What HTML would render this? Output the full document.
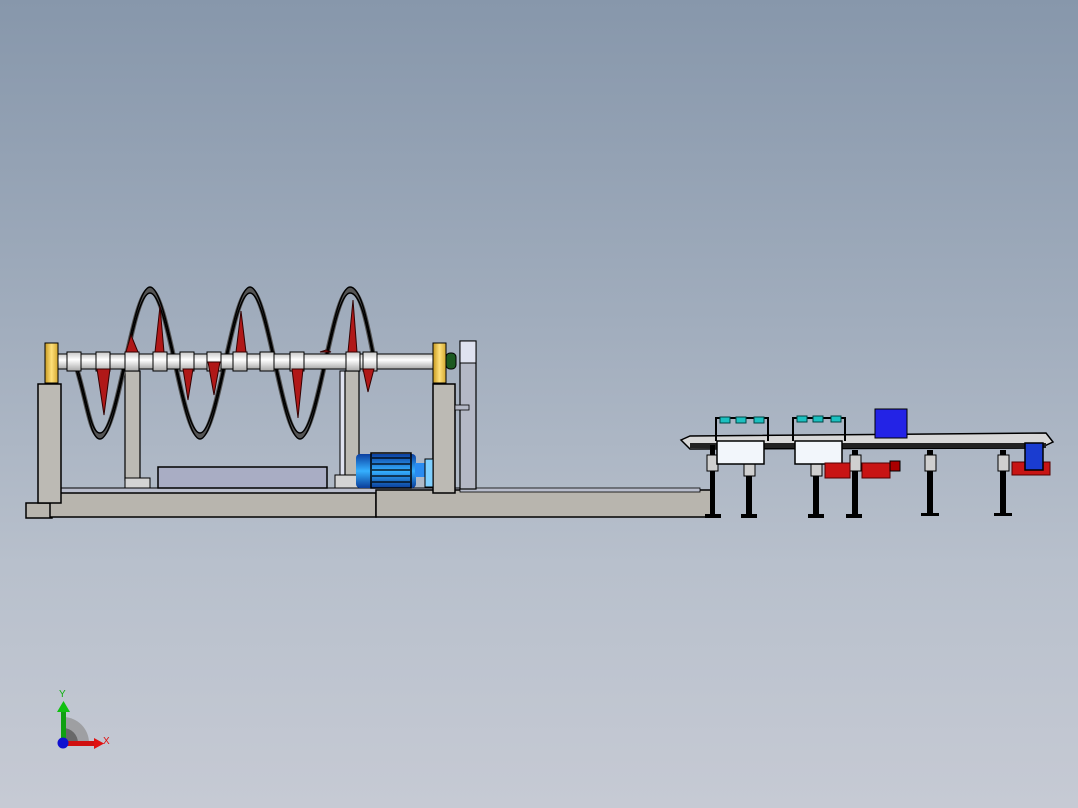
<!DOCTYPE html>
<html><head><meta charset="utf-8"><style>
html,body{margin:0;padding:0;width:1078px;height:808px;overflow:hidden}
body{background:linear-gradient(180deg,#8797ab 0%,#a1adbd 40%,#b8c0cc 70%,#c6cad4 100%)}
svg{position:absolute;left:0;top:0}
</style></head><body>
<svg width="1078" height="808" viewBox="0 0 1078 808" font-family="Liberation Sans, sans-serif">
<defs>
<linearGradient id="sh" x1="0" y1="0" x2="0" y2="1"><stop offset="0" stop-color="#c8c8c8"/><stop offset=".4" stop-color="#ffffff"/><stop offset="1" stop-color="#a8a8a8"/></linearGradient>
<linearGradient id="mot" x1="0" y1="0" x2="0" y2="1"><stop offset="0" stop-color="#0b3fa0"/><stop offset=".5" stop-color="#35b0ff"/><stop offset="1" stop-color="#0a3d9a"/></linearGradient>
<linearGradient id="yel" x1="0" y1="0" x2="1" y2="0"><stop offset="0" stop-color="#c89a20"/><stop offset=".5" stop-color="#ffe07a"/><stop offset="1" stop-color="#d4a830"/></linearGradient>
</defs>
<!-- base -->
<rect x="26" y="503" width="26" height="15" fill="#b8b5ae" stroke="#000" stroke-width="1.5"/>
<rect x="50" y="488" width="420" height="6" fill="#b9bdcc" stroke="#000"/>
<rect x="50" y="493" width="326" height="24" fill="#b8b5ae" stroke="#000" stroke-width="1.5"/>
<rect x="376" y="490" width="335" height="27" fill="#b8b5ae" stroke="#000" stroke-width="1.5"/>
<rect x="460" y="488" width="240" height="4" fill="#b9bdcc" stroke="#000" stroke-width=".8"/>
<!-- box -->
<rect x="158" y="467" width="169" height="21" fill="#a9adc4" stroke="#000" stroke-width="1.5"/>
<!-- posts -->
<rect x="38" y="384" width="23" height="119" fill="#bcbab4" stroke="#000" stroke-width="1.5"/>
<rect x="433" y="384" width="22" height="109" fill="#bcbab4" stroke="#000" stroke-width="1.5"/>
<rect x="460" y="341" width="16" height="148" fill="#b4b8c6" stroke="#000" stroke-width="1.2"/>
<rect x="460" y="341" width="16" height="22" fill="#dfe2f0" stroke="#000"/>
<rect x="455" y="405" width="14" height="5" fill="#b4b8c6" stroke="#000" stroke-width=".8"/>
<rect x="125" y="371" width="15" height="109" fill="#bcbab4" stroke="#000" stroke-width="1.2"/>
<rect x="125" y="478" width="25" height="10" fill="#d4d4d4" stroke="#000"/>
<rect x="340" y="371" width="6" height="110" fill="#dfe2f0" stroke="#000"/>
<rect x="345" y="371" width="14" height="109" fill="#bcbab4" stroke="#000" stroke-width="1.2"/>
<rect x="335" y="475" width="25" height="13" fill="#d4d4d4" stroke="#000"/>
<!-- motor -->
<rect x="356" y="454" width="60" height="34" rx="4" fill="url(#mot)"/>
<g stroke="#000" stroke-width="1.3"><line x1="372" y1="458" x2="410" y2="458"/><line x1="372" y1="464" x2="410" y2="464"/><line x1="372" y1="470" x2="410" y2="470"/><line x1="372" y1="476" x2="410" y2="476"/><line x1="372" y1="482" x2="410" y2="482"/></g>
<rect x="371" y="453" width="40" height="35" fill="none" stroke="#000" stroke-width="1.5"/>
<rect x="415" y="463" width="10" height="14" fill="#2a8cf0"/>
<rect x="425" y="459" width="8" height="28" fill="#7fd0ff" stroke="#000"/>
<!-- helix back -->
<path d="M75,363 C87,400 90,436 100,436 C118,436 132,290 150,290 C168,290 182,436 200,436 C218,436 232,290 250,290 C268,290 282,436 300,436 C318,436 332,290 350,290 C362,290 368,330 375,363" fill="none" stroke="#555" stroke-width="5"/>
<path d="M75,363 C87,400 90,436 100,436 C118,436 132,290 150,290 C168,290 182,436 200,436 C218,436 232,290 250,290 C268,290 282,436 300,436 C318,436 332,290 350,290 C362,290 368,330 375,363" fill="none" stroke="#000" stroke-width="1.5" transform="translate(0,-3)"/>
<path d="M75,363 C87,400 90,436 100,436 C118,436 132,290 150,290 C168,290 182,436 200,436 C218,436 232,290 250,290 C268,290 282,436 300,436 C318,436 332,290 350,290 C362,290 368,330 375,363" fill="none" stroke="#000" stroke-width="1.5" transform="translate(0,3)"/>
<!-- shaft -->
<rect x="58" y="354" width="380" height="15" fill="url(#sh)" stroke="#000"/>
<g fill="url(#sh)" stroke="#000">
<rect x="67" y="352" width="14" height="19"/><rect x="96" y="352" width="14" height="19"/><rect x="125" y="352" width="14" height="19"/><rect x="153" y="352" width="14" height="19"/><rect x="180" y="352" width="14" height="19"/><rect x="207" y="352" width="14" height="19"/><rect x="233" y="352" width="14" height="19"/><rect x="260" y="352" width="14" height="19"/><rect x="290" y="352" width="14" height="19"/><rect x="346" y="352" width="14" height="19"/><rect x="363" y="352" width="14" height="19"/>
</g>
<!-- blades -->
<g fill="#b01818" stroke="#300" stroke-width="1">
<path d="M97,369 L110,369 L104,415Z"/><path d="M183,369 L193,369 L188,400Z"/><path d="M208,362 L220,362 L214,395Z"/><path d="M292,369 L303,369 L298,418Z"/><path d="M363,369 L374,369 L368,392Z"/>
<path d="M126,352 L138,352 L131,335Z"/><path d="M155,352 L164,352 L160,306Z"/><path d="M236,352 L246,352 L241,311Z"/><path d="M320,352 L331,352 L326,350Z"/><path d="M348,352 L357,352 L353,300Z"/>
</g>
<!-- bearings -->
<rect x="45" y="343" width="13" height="40" fill="url(#yel)" stroke="#000"/>
<rect x="433" y="343" width="13" height="40" fill="url(#yel)" stroke="#000"/>
<rect x="446" y="353" width="10" height="16" rx="4" fill="#1d5a22" stroke="#000"/>
<!-- right conveyor -->
<path d="M681,440 L690,436 L1046,433 L1053,442 L1040,448 L690,449Z" fill="#d8d8d8" stroke="#000" stroke-width="1.5"/>
<rect x="690" y="443" width="356" height="5" fill="#222"/>
<g fill="#000">
<rect x="710" y="445" width="5" height="72"/><rect x="746" y="450" width="6" height="67"/><rect x="813" y="450" width="6" height="67"/><rect x="852" y="450" width="6" height="67"/><rect x="927" y="450" width="6" height="66"/><rect x="1000" y="450" width="6" height="66"/>
<rect x="705" y="514" width="16" height="4"/><rect x="741" y="514" width="16" height="4"/><rect x="808" y="514" width="16" height="4"/><rect x="846" y="514" width="16" height="4"/><rect x="921" y="513" width="18" height="3"/><rect x="994" y="513" width="18" height="3"/>
</g>
<g fill="#cfcfcf" stroke="#000"><rect x="707" y="455" width="11" height="16"/><rect x="744" y="460" width="11" height="16"/><rect x="811" y="460" width="11" height="16"/><rect x="850" y="455" width="11" height="16"/><rect x="925" y="455" width="11" height="16"/><rect x="998" y="455" width="11" height="16"/></g>
<!-- frames -->
<path d="M716,441 V418 H768 V441" fill="none" stroke="#000" stroke-width="2"/>
<path d="M793,441 V418 H845 V441" fill="none" stroke="#000" stroke-width="2"/>
<g fill="#1cc0c0" stroke="#044"><rect x="720" y="417" width="10" height="6"/><rect x="736" y="417" width="10" height="6"/><rect x="754" y="417" width="10" height="6"/><rect x="797" y="416" width="10" height="6"/><rect x="813" y="416" width="10" height="6"/><rect x="831" y="416" width="10" height="6"/></g>
<rect x="717" y="441" width="47" height="23" fill="#f2f6fb" stroke="#000" stroke-width="1.5"/>
<rect x="795" y="441" width="47" height="23" fill="#f2f6fb" stroke="#000" stroke-width="1.5"/>
<rect x="875" y="409" width="32" height="29" fill="#2323e6" stroke="#000"/>
<!-- red motors -->
<rect x="825" y="463" width="25" height="15" fill="#c81414" stroke="#500"/>
<rect x="862" y="463" width="28" height="15" fill="#c81414" stroke="#500"/>
<rect x="890" y="461" width="10" height="10" fill="#a00" stroke="#000"/>
<rect x="1012" y="462" width="38" height="13" fill="#c81414" stroke="#500"/>
<rect x="1025" y="443" width="18" height="27" fill="#1a3cd0" stroke="#000" stroke-width="1.5"/>
<!-- triad -->
<path d="M63,743 L63,717 A26,26 0 0 1 89,743Z" fill="#8e8e8e" opacity=".7"/>
<path d="M63,743 L63,728 A15,15 0 0 1 78,743Z" fill="#5a5a5a" opacity=".8"/>
<rect x="61" y="710" width="5" height="33" fill="#10a010"/>
<path d="M57,712 L63.5,701 L70,712Z" fill="#10c010"/>
<rect x="63" y="741" width="33" height="5" fill="#d01010"/>
<path d="M94,738 L104,743.5 L94,749Z" fill="#e01010"/>
<circle cx="63" cy="743" r="5.5" fill="#1010d0"/>
<text x="59" y="697" font-size="10" fill="#10b010">Y</text>
<text x="103" y="744" font-size="10" fill="#e01010">X</text>
</svg>
</body></html>
